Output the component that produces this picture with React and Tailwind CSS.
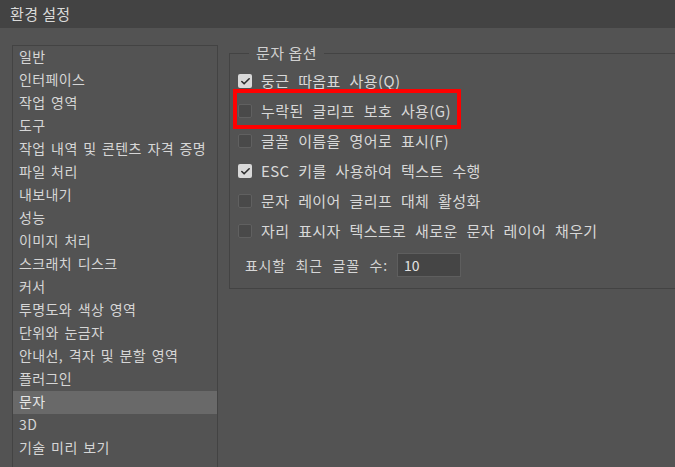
import { Check } from 'lucide-react'

const categories = [
  '일반',
  '인터페이스',
  '작업 영역',
  '도구',
  '작업 내역 및 콘텐츠 자격 증명',
  '파일 처리',
  '내보내기',
  '성능',
  '이미지 처리',
  '스크래치 디스크',
  '커서',
  '투명도와 색상 영역',
  '단위와 눈금자',
  '안내선, 격자 및 분할 영역',
  '플러그인',
  '문자',
  '3D',
  '기술 미리 보기',
]

const options = [
  { label: '둥근 따옴표 사용(Q)', checked: true },
  { label: '누락된 글리프 보호 사용(G)', checked: false },
  { label: '글꼴 이름을 영어로 표시(F)', checked: false },
  { label: 'ESC 키를 사용하여 텍스트 수행', checked: true },
  { label: '문자 레이어 글리프 대체 활성화', checked: false },
  { label: '자리 표시자 텍스트로 새로운 문자 레이어 채우기', checked: false },
]

function CheckBox({ checked }) {
  if (checked) {
    return (
      <span className="w-[14px] h-[14px] shrink-0 rounded-[2px] bg-[#d9d9d9] flex items-center justify-center">
        <Check size={11} strokeWidth={3.5} className="text-[#2e2e2e]" />
      </span>
    )
  }
  return <span className="w-[14px] h-[14px] shrink-0 rounded-[2px] bg-[#494949] border border-[#606060]" />
}

export default function App() {
  return (
    <div className="w-[675px] h-[467px] overflow-hidden bg-[#535353] text-[#d6d6d6] font-['Noto_Sans_CJK_KR','Noto_Sans',sans-serif]">
      {/* 타이틀 바 */}
      <div className="h-[28px] bg-[#434343] flex items-center px-[10px] text-[15px] tracking-[0.4px] text-[#dadada]">
        환경 설정
      </div>

      <div className="flex items-start pl-[12px] pt-[17px]">
        {/* 카테고리 목록 */}
        <ul className="w-[206px] h-[440px] shrink-0 border border-[#434343]">
          {categories.map((c) => (
            <li
              key={c}
              className={`h-[23px] flex items-center pl-[6px] pb-[3px] text-[14px] tracking-[0.4px] [word-spacing:2px] ${
                c === '문자' ? 'bg-[#696969] text-[#e4e4e4]' : ''
              }`}
            >
              {c}
            </li>
          ))}
        </ul>

        {/* 문자 옵션 */}
        <fieldset className="ml-[11px] w-[480px] shrink-0 border border-[#434343] pb-[11px]">
          <legend className="ml-[19px] px-[7px] text-[15px] leading-[16px] tracking-[0.5px] text-[#d0d0d0]">문자 옵션</legend>
          <div className="relative pt-[5px]">
            {options.map((o) => (
              <div key={o.label} className="h-[30px] flex items-center gap-[9px] pl-[8px]">
                <CheckBox checked={o.checked} />
                <span className="text-[15px] tracking-[0.4px] [word-spacing:5px] text-[#d8d8d8]">{o.label}</span>
              </div>
            ))}

            <div className="mt-[7px] flex items-center pl-[15px]">
              <span className="w-[152px] text-[14px] tracking-[0.7px] [word-spacing:6px]">표시할 최근 글꼴 수:</span>
              <div className="w-[64px] h-[24px] bg-[#454545] border border-[#5e5e5e] flex items-center pl-[6px] text-[14px] text-[#e2e2e2]">
                10
              </div>
            </div>

            {/* 강조 표시 */}
            <div className="absolute left-[3px] top-[28px] w-[228px] h-[40px] border-[4px] border-[#ff0000]" />
          </div>
        </fieldset>
      </div>
    </div>
  )
}
